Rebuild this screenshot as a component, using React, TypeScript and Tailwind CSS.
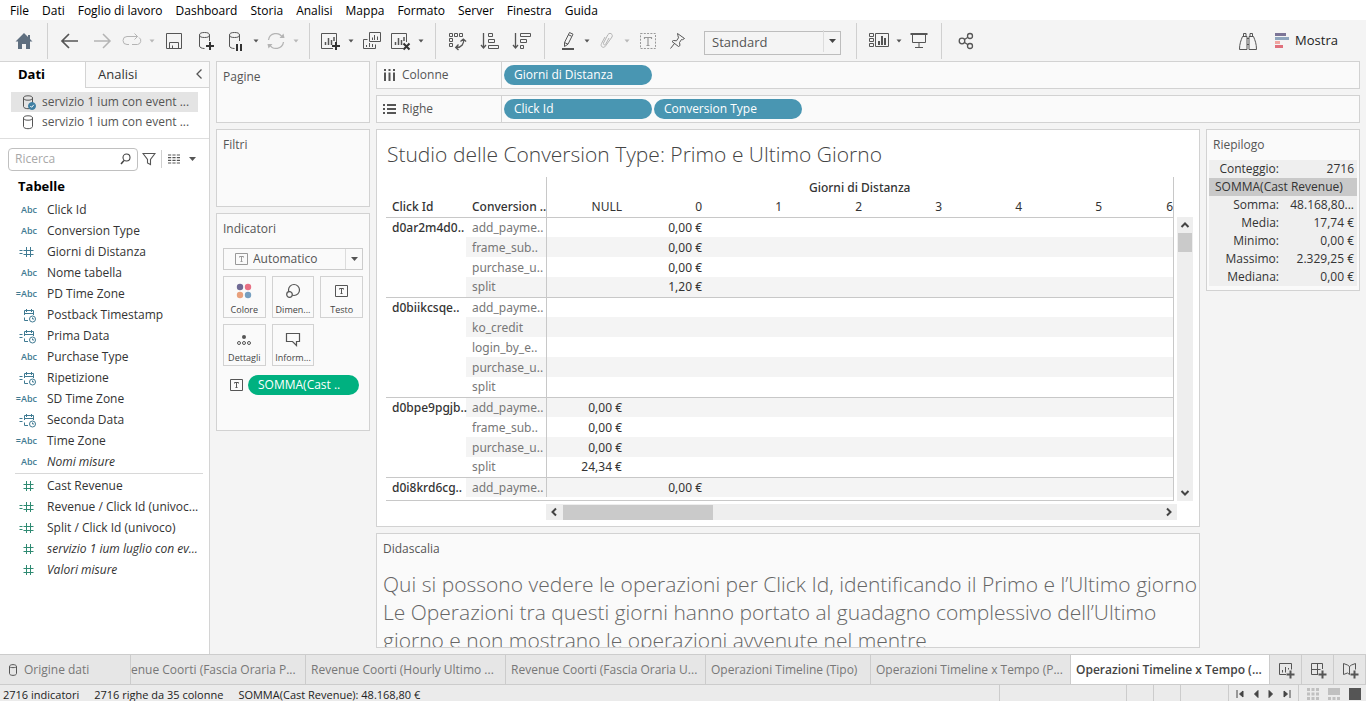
import type { ReactNode } from "react";

const MENU = ["File", "Dati", "Foglio di lavoro", "Dashboard", "Storia", "Analisi", "Mappa", "Formato", "Server", "Finestra", "Guida"];

type Kind = "abc" | "cabc" | "num" | "cnum" | "date" | "cdate";
type Field = { name: string; kind: Kind; italic?: boolean };

const DIMENSIONS: Field[] = [
  { name: "Click Id", kind: "abc" },
  { name: "Conversion Type", kind: "abc" },
  { name: "Giorni di Distanza", kind: "cnum" },
  { name: "Nome tabella", kind: "abc" },
  { name: "PD Time Zone", kind: "cabc" },
  { name: "Postback Timestamp", kind: "date" },
  { name: "Prima Data", kind: "cdate" },
  { name: "Purchase Type", kind: "abc" },
  { name: "Ripetizione", kind: "cdate" },
  { name: "SD Time Zone", kind: "cabc" },
  { name: "Seconda Data", kind: "cdate" },
  { name: "Time Zone", kind: "cabc" },
  { name: "Nomi misure", kind: "abc", italic: true },
];

const MEASURES: Field[] = [
  { name: "Cast Revenue", kind: "num" },
  { name: "Revenue / Click Id (univoc...", kind: "cnum" },
  { name: "Split / Click Id (univoco)", kind: "cnum" },
  { name: "servizio 1 ium luglio con ev...", kind: "num", italic: true },
  { name: "Valori misure", kind: "num", italic: true },
];

const COLUMNS = ["NULL", "0", "1", "2", "3", "4", "5", "6"];

type Row = { type: string; col?: string; value?: string };
const GROUPS: { id: string; rows: Row[] }[] = [
  {
    id: "d0ar2m4d0..",
    rows: [
      { type: "add_payme..", col: "0", value: "0,00 €" },
      { type: "frame_sub..", col: "0", value: "0,00 €" },
      { type: "purchase_u..", col: "0", value: "0,00 €" },
      { type: "split", col: "0", value: "1,20 €" },
    ],
  },
  {
    id: "d0biikcsqe..",
    rows: [{ type: "add_payme.." }, { type: "ko_credit" }, { type: "login_by_e.." }, { type: "purchase_u.." }, { type: "split" }],
  },
  {
    id: "d0bpe9pgjb..",
    rows: [
      { type: "add_payme..", col: "NULL", value: "0,00 €" },
      { type: "frame_sub..", col: "NULL", value: "0,00 €" },
      { type: "purchase_u..", col: "NULL", value: "0,00 €" },
      { type: "split", col: "NULL", value: "24,34 €" },
    ],
  },
  { id: "d0i8krd6cg..", rows: [{ type: "add_payme..", col: "0", value: "0,00 €" }] },
];

const SUMMARY = [
  ["Somma:", "48.168,80..."],
  ["Media:", "17,74 €"],
  ["Minimo:", "0,00 €"],
  ["Massimo:", "2.329,25 €"],
  ["Mediana:", "0,00 €"],
];

function Icon({ children, w = 24, h = 24, className = "" }: { children: ReactNode; w?: number; h?: number; className?: string }) {
  return (
    <svg width={w} height={h} viewBox={`0 0 ${w} ${h}`} fill="none" stroke="currentColor" className={`shrink-0 ${className}`} aria-hidden="true">
      {children}
    </svg>
  );
}

function Tool({ label, children, className = "w-8 text-[#555]" }: { label: string; children: ReactNode; className?: string }) {
  return (
    <button type="button" aria-label={label} className={`flex h-10 shrink-0 items-center justify-center ${className}`}>
      {children}
    </button>
  );
}

function Caret({ label, muted = false }: { label: string; muted?: boolean }) {
  return (
    <button type="button" aria-label={label} className={`flex h-10 w-3 shrink-0 items-center justify-center ${muted ? "text-[#b8b8b8]" : "text-[#555]"}`}>
      <Icon w={6} h={4}>
        <path d="M0.500 0.500h5L3 3.500z" fill="currentColor" stroke="none" />
      </Icon>
    </button>
  );
}

const Sep = ({ className = "" }: { className?: string }) => <span className={`h-9 w-px shrink-0 bg-[#d0d0d0] ${className}`} />;

const Cylinder = () => (
  <>
    <ellipse cx="10.5" cy="6" rx="5" ry="2.5" />
    <path d="M5.500 6v11c0 1.400 2.200 2.500 5 2.500M15.500 6v6" />
  </>
);

const ChartBox = () => (
  <>
    <path d="M14 19.500H2.500v-15h15V13" />
    <path d="M6.500 16v-3M9.500 16V9M12.500 16v-5M15 12V8" strokeWidth="1.500" />
  </>
);

function Toolbar() {
  return (
    <div role="toolbar" aria-label="Strumenti" className="flex h-[41px] shrink-0 items-center bg-[#f4f4f4]">
      <Tool label="Home" className="w-[47px] text-[#5f6f80]">
        <Icon>
          <path d="M12 4L3.500 12.500H6V20h4v-5h4v5h4v-7.500h2.500L18 10V6h-2v2z" fill="currentColor" stroke="none" />
        </Icon>
      </Tool>
      <Sep className="mr-1.5" />
      <Tool label="Indietro">
        <Icon>
          <path d="M20 12H4.500M11 5l-7 7 7 7" strokeWidth="1.700" />
        </Icon>
      </Tool>
      <Tool label="Avanti" className="w-8 text-[#b4b4b4]">
        <Icon>
          <path d="M4 12h15.500M13 5l7 7-7 7" strokeWidth="1.500" />
        </Icon>
      </Tool>
      <Tool label="Ripeti" className="w-7 text-[#b4b4b4]">
        <Icon>
          <path d="M9 15.500H7a4 4 0 0 1 0-8H17.500M14.500 4.500l3 3-3 3M19 8.500a3.800 3.800 0 0 1-1.500 7H12" />
        </Icon>
      </Tool>
      <Caret label="Opzioni ripeti" muted />
      <Tool label="Salva">
        <Icon>
          <path d="M4.500 4.500h15v15h-15zM7.500 19v-5.500h9V19M10.500 19v-2.500" />
        </Icon>
      </Tool>
      <Tool label="Nuova origine dati">
        <Icon>
          <Cylinder />
          <path d="M16 13v8M12 17h8" stroke="#333" strokeWidth="2" />
        </Icon>
      </Tool>
      <Tool label="Sospendi aggiornamenti" className="w-7 text-[#555]">
        <Icon>
          <Cylinder />
          <path d="M13 15v7M17 15v7" stroke="#333" strokeWidth="2" />
        </Icon>
      </Tool>
      <Caret label="Opzioni aggiornamenti" />
      <Tool label="Aggiorna" className="w-7 text-[#b4b4b4]">
        <Icon>
          <path d="M4.500 11a7.500 7.500 0 0 1 14-2.500M19.500 13a7.500 7.500 0 0 1-14 2.500" strokeWidth="1.300" />
          <path d="M15.500 9h5l-1-4.500zM8.500 15h-5l1 4.500z" fill="currentColor" stroke="none" />
        </Icon>
      </Tool>
      <Caret label="Opzioni aggiorna" muted />
      <Sep className="ml-[7px] mr-[7px]" />
      <Tool label="Nuovo foglio" className="w-7 text-[#555]">
        <Icon>
          <ChartBox />
          <path d="M17 13v8M13 17h8" stroke="#333" strokeWidth="2" />
        </Icon>
      </Tool>
      <Caret label="Opzioni nuovo foglio" />
      <Tool label="Duplica foglio" className="w-[30px] text-[#555]">
        <Icon>
          <path d="M9.500 3.500h11v9h-11zM12.500 11V8.500M14.500 11V6M17.500 11V7.500" />
          <path d="M7.500 10.500h-4v9h12v-4M6.500 18v-2M9.500 18v-4M12.500 18v-3" />
        </Icon>
      </Tool>
      <Tool label="Cancella foglio" className="w-7 text-[#555]">
        <Icon>
          <ChartBox />
          <path d="M14.500 14.500l6 6M20.500 14.500l-6 6" stroke="#333" strokeWidth="2" />
        </Icon>
      </Tool>
      <Caret label="Opzioni cancella" />
      <Sep className="ml-2 mr-1.5" />
      <Tool label="Scambia righe e colonne">
        <Icon>
          <path d="M3.500 4.500h3v3h-3zM8.500 4.500h3v3h-3zM13.500 4.500h3v3h-3zM3.500 9.500h3v3h-3zM3.500 14.500h3v3h-3z" />
          <path d="M17.500 10.500c1 4-2 8-7 8M14.500 12.500l2.800-2.500 2.800 2.500M12.500 15.500l-2.800 3 2.800 2.500" strokeWidth="1.300" />
        </Icon>
      </Tool>
      <Tool label="Ordina crescente">
        <Icon>
          <path d="M5.500 4v15M3 16l2.500 3L8 16" strokeWidth="1.300" />
          <path d="M10.500 4.500h4v3h-4zM10.500 10.500h6v3h-6zM10.500 16.500h10v3h-10z" />
        </Icon>
      </Tool>
      <Tool label="Ordina decrescente">
        <Icon>
          <path d="M5.500 4v15M3 16l2.500 3L8 16" strokeWidth="1.300" />
          <path d="M10.500 4.500h10v3h-10zM10.500 10.500h6v3h-6zM10.500 16.500h3v3h-3z" />
        </Icon>
      </Tool>
      <Sep className="ml-1.5 mr-2.5" />
      <Tool label="Evidenzia" className="w-[26px] text-[#555]">
        <Icon>
          <path d="M8.500 13.500l5-10 3.500 1.700-5 10-3.500 2.300zM8.500 13.500l3.500 1.700M12 5.500l3.500 1.700" />
          <path d="M6 20h12" strokeWidth="2" />
        </Icon>
      </Tool>
      <Caret label="Opzioni evidenzia" />
      <Tool label="Raggruppa" className="w-7 text-[#b4b4b4]">
        <Icon>
          <path d="M10 8l-3.500 6.500c-1.500 3 2 5.500 4 2.500L17 8c1.500-3-2.500-5-4-2.500L8.500 14c-.5 2 1.500 2.500 2.200 1.200L14 9" />
        </Icon>
      </Tool>
      <Caret label="Opzioni raggruppa" muted />
      <Tool label="Mostra etichette" className="w-[30px] text-[#999]">
        <Icon>
          <path d="M4.500 4.500h15v15h-15z" strokeDasharray="2 1.300" />
          <path d="M8.500 10V8.500h7V10M12 8.500v8M10.500 16.500h3" strokeWidth="1.200" />
        </Icon>
      </Tool>
      <Tool label="Blocca assi" className="w-7 text-[#555]">
        <Icon>
          <path d="M12.500 4.500l7 5-2 1.200-1-.2-2 3 .5 3-1.500 1L7 12.500l1.500-1 3 .3 2-3-.6-2.300zM9.500 14.500l-4 5" />
        </Icon>
      </Tool>
      <div className="relative ml-[13px] h-6 w-[137px] shrink-0">
        <select aria-label="Adatta" className="h-6 w-full appearance-none rounded-none border border-[#bdbdbd] bg-[#f4f4f4] pb-1 pl-[7px] text-[13px] leading-5 text-[#555]">
          <option>Standard</option>
        </select>
        <span className="pointer-events-none absolute inset-y-px right-px flex w-[17px] items-center justify-center border-l border-[#dcdcdc] text-[#444]">
          <Icon w={7} h={4}>
            <path d="M0 0h7L3.500 4z" fill="currentColor" stroke="none" />
          </Icon>
        </span>
      </div>
      <Sep className="ml-[15px] mr-2" />
      <Tool label="Mostra schede" className="w-7 text-[#555]">
        <Icon>
          <path d="M2.500 4.500h4v3h-4zM2.500 9.500h4v3h-4zM2.500 14.500h4v3h-4zM8.500 4.500h13v13h-13z" />
          <path d="M12 16v-4M15 16V7M18 16V9" strokeWidth="2" />
        </Icon>
      </Tool>
      <Caret label="Opzioni schede" />
      <Tool label="Presentazione" className="w-7 text-[#555]">
        <Icon>
          <path d="M3.500 5h17" strokeWidth="2" />
          <path d="M5.500 5.500v8h13v-8M12 13.500v5M8 18.500h8" />
        </Icon>
      </Tool>
      <Sep className="ml-2 mr-2" />
      <Tool label="Condividi">
        <Icon>
          <circle cx="8" cy="12" r="2.800" strokeWidth="1.300" />
          <circle cx="16" cy="7" r="2.500" strokeWidth="1.300" />
          <circle cx="16" cy="17" r="2.500" strokeWidth="1.300" />
          <path d="M10.500 10.500L14 8.300M10.500 13.500l3.500 2.200" strokeWidth="1.300" />
        </Icon>
      </Tool>
      <Tool label="Cerca" className="ml-auto w-8 text-[#555]">
        <Icon>
          <path d="M3.500 20.500c0-6 1.500-9 3-13h4.500v13zM20.500 20.500c0-6-1.500-9-3-13H13v13zM7.500 7.500v-3h2.500v3M14 7.500v-3h2.500v3M11 9.500h2M11 15.500h2" />
        </Icon>
      </Tool>
      <button type="button" className="ml-2.5 mr-7 flex h-10 items-center gap-1.5 pb-0.5 text-[13px] leading-5 text-[#222]">
        <Icon w={15} h={16} className="text-transparent">
          <path d="M1 1h11v3H1z" fill="#7c7597" />
          <path d="M1 5h14v3H1z" fill="#8fa5bd" />
          <path d="M1 9h5v3H1z" fill="#f0a5a0" />
          <path d="M1 13h8v3H1z" fill="#e0707c" />
        </Icon>
        Mostra
      </button>
    </div>
  );
}

function FieldIcon({ kind, color }: { kind: Kind; color: string }) {
  if (kind === "abc" || kind === "cabc") {
    return (
      <span className={`text-[9px] font-semibold leading-4 ${color}`}>
        {kind === "cabc" ? "=" : ""}Abc
      </span>
    );
  }
  const calculated = kind === "cnum" || kind === "cdate";
  return (
    <Icon w={18} h={16} className={color}>
      {calculated && <path d="M0.500 6.500h3M0.500 9.500h3" />}
      {kind === "num" || kind === "cnum" ? (
        <path d="M7.500 3v10M11.500 3v10M4.500 6.500h10M4.500 10.500h10" />
      ) : (
        <>
          <path d="M9 13.500H5.500v-3M5.500 8v-4.500h9V8M5 6.500h10M7.500 2v3M12.500 2v3" />
          <circle cx="13.500" cy="12" r="3" />
          <path d="M13.500 10.500V12H15" />
        </>
      )}
    </Icon>
  );
}

function FieldList({ items, color }: { items: Field[]; color: string }) {
  return (
    <ul>
      {items.map((f) => (
        <li key={f.name} className="flex h-[21px] items-center text-[#333]">
          <span className="mr-2.5 flex w-[37px] shrink-0 justify-end">
            <FieldIcon kind={f.kind} color={color} />
          </span>
          <span className={`whitespace-nowrap text-[12px] leading-5 ${f.italic ? "italic" : ""}`}>{f.name}</span>
        </li>
      ))}
    </ul>
  );
}

function DataPane() {
  return (
    <aside className="flex w-[210px] shrink-0 flex-col border-r border-[#d4d4d4] bg-white">
      <div className="flex h-[27px] text-[13px] leading-5 text-[#333]">
        <button type="button" className="w-[85px] shrink-0 border-t border-[#d4d4d4] pb-0.5 pl-[18px] text-left font-bold text-black">
          Dati
        </button>
        <div className="flex flex-1 items-center border border-r-0 border-[#d4d4d4] bg-[#f9f9f9] pb-0.5 pl-3">
          <button type="button">Analisi</button>
          <button type="button" aria-label="Comprimi" className="ml-auto mr-1.5 text-[#555]">
            <Icon w={8} h={12}>
              <path d="M6.500 1.500L2 6l4.500 4.500" strokeWidth="1.300" />
            </Icon>
          </button>
        </div>
      </div>
      <ul className="mt-1 border-b border-[#dedede] pb-1.5 text-[12px] leading-5 text-[#555]">
        {[true, false].map((on) => (
          <li key={String(on)} className={`ml-[11px] mr-[11px] flex h-5 items-center gap-1.5 pl-2.5 ${on ? "bg-[#e4e4e4]" : ""}`}>
            <Icon w={15} h={16}>
              <ellipse cx="7" cy="4" rx="4.500" ry="2.200" />
              <path d="M2.500 4v8.500c0 1.200 2 2.200 4.500 2.200s4.500-1 4.500-2.200V4" />
              {on && (
                <>
                  <circle cx="11" cy="12" r="3.500" fill="#3f7fa3" stroke="#3f7fa3" />
                  <path d="M9.300 12l1.300 1.300 2.200-2.500" stroke="#fff" />
                </>
              )}
            </Icon>
            servizio 1 ium con event ...
          </li>
        ))}
      </ul>
      <div className="mt-2 flex h-6 items-center pl-2">
        <label className="flex h-[23px] w-[130px] items-center rounded-sm border border-[#c0c0c0] pl-1.5 pr-1.5">
          <input type="text" aria-label="Ricerca" placeholder="Ricerca" className="w-0 flex-1 bg-transparent text-[12px] leading-5 outline-none placeholder:text-[#a8a8a8]" />
          <Icon w={11} h={12} className="text-[#444]">
            <circle cx="6.500" cy="4.500" r="3.500" strokeWidth="1.100" />
            <path d="M4 7.500L1 11" strokeWidth="1.500" />
          </Icon>
        </label>
        <button type="button" aria-label="Filtra" className="ml-1 text-[#555]">
          <Icon w={14} h={14}>
            <path d="M1 1.500h12L8.500 7.500v5l-3-1.500V7.500z" strokeWidth="1.100" />
          </Icon>
        </button>
        <span className="ml-[5px] h-[18px] w-px bg-[#d0d0d0]" />
        <button type="button" aria-label="Visualizza" className="ml-1.5 flex items-center gap-[9px] text-[#555]">
          <Icon w={12} h={10}>
            <path d="M0 1h12M0 3.700h12M0 6.400h12M0 9h12" strokeWidth="1.200" strokeDasharray="3.200 1.200" />
          </Icon>
          <Icon w={7} h={4}>
            <path d="M0 0h7L3.500 4z" fill="currentColor" stroke="none" />
          </Icon>
        </button>
      </div>
      <h2 className="mt-1 pl-[18px] text-[13px] font-bold leading-[22px] text-black">Tabelle</h2>
      <div className="mt-0.5">
        <FieldList items={DIMENSIONS} color="text-[#3f7a92]" />
        <div className="mb-px ml-[15px] mr-1.5 mt-px border-t border-[#d8d8d8]" />
        <FieldList items={MEASURES} color="text-[#2f8a72]" />
      </div>
    </aside>
  );
}

function TextIcon({ className = "" }: { className?: string }) {
  return (
    <Icon w={13} h={12} className={className}>
      <path d="M0.500 0.500h12v11h-12z" />
      <path d="M4.500 4.500v-1h4v1M6.500 3.500v5M5.500 8.500h2" />
    </Icon>
  );
}

const MARKS: { label: string; icon: ReactNode }[] = [
  {
    label: "Colore",
    icon: (
      <Icon w={16} h={16} className="text-transparent">
        <circle cx="4" cy="4" r="3.200" fill="#6f6a94" />
        <circle cx="12" cy="4" r="3.200" fill="#e87084" />
        <circle cx="4" cy="12" r="3.200" fill="#e8a07c" />
        <circle cx="12" cy="12" r="3.200" fill="#769fc0" />
      </Icon>
    ),
  },
  {
    label: "Dimen...",
    icon: (
      <Icon w={16} h={16}>
        <circle cx="9" cy="7" r="5.500" strokeWidth="1.200" />
        <circle cx="4.500" cy="11.500" r="2.800" fill="#fafafa" strokeWidth="1.200" />
      </Icon>
    ),
  },
  { label: "Testo", icon: <TextIcon /> },
  {
    label: "Dettagli",
    icon: (
      <Icon w={16} h={16}>
        <circle cx="8" cy="6" r="2" fill="currentColor" stroke="none" />
        <circle cx="3" cy="12" r="1.500" />
        <circle cx="8" cy="12" r="1.500" />
        <circle cx="13" cy="12" r="1.500" />
      </Icon>
    ),
  },
  {
    label: "Inform...",
    icon: (
      <Icon w={16} h={16}>
        <path d="M1.500 2.500h13v8h-3v4l-4-4h-6z" strokeWidth="1.200" />
      </Icon>
    ),
  },
];

function Cards() {
  const card = "border border-[#d2d2d2] bg-[#fafafa] px-1.5";
  const title = "text-[12px] leading-[30px] text-[#555]";
  return (
    <div className="flex w-[154px] shrink-0 flex-col gap-1.5">
      <section className={`h-[62px] ${card}`}>
        <h2 className={title}>Pagine</h2>
      </section>
      <section className={`h-[78px] ${card}`}>
        <h2 className={title}>Filtri</h2>
      </section>
      <section className={`pb-[35px] ${card}`}>
        <h2 className={title}>Indicatori</h2>
        <div className="relative mt-1 flex h-[22px] text-[#555]">
          <TextIcon className="absolute left-3 top-[5px] text-[#999]" />
          <select aria-label="Tipo di indicatore" className="w-full appearance-none rounded-none border border-[#ccc] bg-transparent pl-[29px] text-[12px] leading-5">
            <option>Automatico</option>
          </select>
          <span className="pointer-events-none absolute inset-y-px right-px flex w-[17px] items-center justify-center border-l border-[#dcdcdc]">
            <Icon w={7} h={4}>
              <path d="M0 0h7L3.500 4z" fill="currentColor" stroke="none" />
            </Icon>
          </span>
        </div>
        <div className="mt-1.5 grid grid-cols-3 gap-x-[6px] gap-y-1.5">
          {MARKS.map((m) => (
            <button key={m.label} type="button" className="flex h-[42px] flex-col items-center justify-between border border-[#d2d2d2] pt-1.5 text-[9px] leading-[14px] text-[#444]">
              <span className="flex h-4 items-center text-[#555]">{m.icon}</span>
              <span>{m.label}</span>
            </button>
          ))}
        </div>
        <div className="mt-[9px] flex items-center gap-[5px] pl-[7px] text-[#555]">
          <TextIcon />
          <span className="mr-1 h-5 flex-1 whitespace-nowrap rounded-full bg-[#00b180] pl-2.5 text-[12px] font-medium leading-5 text-white">SOMMA(Cast ..</span>
        </div>
      </section>
    </div>
  );
}

function Shelf({ label, icon, pills }: { label: string; icon: ReactNode; pills: string[] }) {
  return (
    <section className="flex h-7 items-center border border-[#d2d2d2] bg-[#fafafa]">
      <h2 className="flex h-full w-[125px] shrink-0 items-center gap-1.5 border-r border-[#d2d2d2] pl-1.5 text-[12px] leading-5 text-[#555]">
        {icon}
        {label}
      </h2>
      <div className="flex gap-0.5 pl-0.5">
        {pills.map((p) => (
          <span key={p} className="h-5 w-[148px] rounded-full bg-[#4996b2] pl-2.5 text-[12px] font-medium leading-5 text-white">
            {p}
          </span>
        ))}
      </div>
    </section>
  );
}

function Crosstab() {
  let index = 0;
  return (
    <div className="h-[324px] min-w-0 flex-1 overflow-hidden border-b border-r border-[#c8c8c8]">
      <table className="w-full table-fixed border-collapse font-['Noto_Sans','Open_Sans',sans-serif] text-[12px] leading-[19px] text-[#333]">
        <colgroup>
          {Array.from({ length: 9 }, (_, i) => (
            <col key={i} className="w-20" />
          ))}
          <col />
        </colgroup>
        <thead>
          <tr className="h-5">
            <td colSpan={2} className="border-r border-[#c8c8c8]" />
            <th colSpan={8} scope="colgroup" className="text-center font-medium">
              Giorni di Distanza
            </th>
          </tr>
          <tr className="h-5 border-b border-[#c8c8c8]">
            <th scope="col" className="whitespace-nowrap pl-1.5 text-left font-medium">Click Id</th>
            <th scope="col" className="whitespace-nowrap border-r border-[#c8c8c8] pl-1.5 text-left font-medium">Conversion ..</th>
            {COLUMNS.map((c) => (
              <th key={c} scope="col" className={`text-right font-normal ${c === "6" ? "" : "pr-1"}`}>
                {c}
              </th>
            ))}
          </tr>
        </thead>
        <tbody>
          {GROUPS.map((g) =>
            g.rows.map((r, i) => {
              const striped = index++ % 2 === 1;
              const bg = striped ? "bg-[#f4f4f4]" : "";
              const line = i === 0 ? "border-t border-[#c8c8c8]" : "";
              return (
                <tr key={g.id + r.type} className={`h-5 ${line}`}>
                  {i === 0 && (
                    <th scope="rowgroup" rowSpan={g.rows.length} className="whitespace-nowrap pl-1.5 text-left align-top font-medium">
                      {g.id}
                    </th>
                  )}
                  <td className={`whitespace-nowrap border-r border-[#c8c8c8] pl-1.5 text-[#777] ${bg}`}>{r.type}</td>
                  {COLUMNS.map((c) => (
                    <td key={c} className={`pr-1 text-right ${bg}`}>
                      {r.col === c ? r.value : ""}
                    </td>
                  ))}
                </tr>
              );
            }),
          )}
        </tbody>
      </table>
    </div>
  );
}

function Arrow({ d, label }: { d: string; label: string }) {
  return (
    <button type="button" aria-label={label} className="flex h-4 w-4 shrink-0 items-center justify-center text-[#444]">
      <Icon w={10} h={10}>
        <path d={d} strokeWidth="2" />
      </Icon>
    </button>
  );
}

function Sheet() {
  return (
    <section className="border border-[#d2d2d2] bg-white pb-1.5 pl-[9px]">
      <h1 className="whitespace-nowrap pl-px pt-[7px] text-[21px] font-light leading-[35px] text-[#444]">Studio delle Conversion Type: Primo e Ultimo Giorno</h1>
      <div className="mt-[5px] flex pr-1.5">
        <Crosstab />
        <div className="ml-[3px] mt-10 flex w-4 flex-col items-center bg-[#eee]">
          <Arrow label="Su" d="M1.500 7L5 3.500 8.500 7" />
          <div className="h-[19px] w-3.5 bg-[#cacaca]" />
          <div className="mt-auto">
            <Arrow label="Giù" d="M1.500 3L5 6.500 8.500 3" />
          </div>
        </div>
      </div>
      <div className="ml-40 mr-[22px] mt-[3px] flex h-4 items-center bg-[#eee]">
        <Arrow label="Sinistra" d="M7 1.500L3.500 5 7 8.500" />
        <div className="ml-px h-[15px] w-[150px] bg-[#cacaca]" />
        <div className="ml-auto">
          <Arrow label="Destra" d="M3 1.500L6.500 5 3 8.500" />
        </div>
      </div>
    </section>
  );
}

function Summary() {
  return (
    <section className="w-[154px] shrink-0 self-start border border-[#d2d2d2] bg-[#fafafa] px-0.5 pb-1">
      <h2 className="pl-1 text-[12px] leading-[30px] text-[#555]">Riepilogo</h2>
      <table className="w-full table-fixed bg-[#efefef] text-[12px] leading-[18px] text-[#333]">
        <tbody>
          <tr>
            <th scope="row" className="w-[70px] text-right font-normal">Conteggio:</th>
            <td className="pr-[3px] text-right">2716</td>
          </tr>
          <tr className="bg-[#c9c9c9]">
            <th scope="colgroup" colSpan={2} className="whitespace-nowrap pl-1.5 text-left font-normal">SOMMA(Cast Revenue)</th>
          </tr>
          {SUMMARY.map(([k, v]) => (
            <tr key={k}>
              <th scope="row" className="text-right font-normal">{k}</th>
              <td className="whitespace-nowrap pr-[3px] text-right">{v}</td>
            </tr>
          ))}
        </tbody>
      </table>
    </section>
  );
}

function SheetTabs() {
  const tab = "flex shrink-0 items-center whitespace-nowrap border-r border-[#ccc] text-[12px] leading-5";
  const plus = <path d="M13.500 9.500v8M9.500 13.500h8" strokeWidth="2" />;
  return (
    <nav className="flex h-[31px] shrink-0 border-y border-[#ccc] bg-[#e6e6e6] text-[#777]">
      <button type="button" className={`w-[131px] gap-1.5 pl-[9px] ${tab}`}>
        <Icon w={9} h={12} className="text-[#555]">
          <path d="M0.500 2.500c0-2.500 7-2.500 7 0v7c0 2.500-7 2.500-7 0zc0 1.500 7 1.500 7 0" />
        </Icon>
        Origine dati
      </button>
      <button type="button" className={`w-[175px] ${tab}`}>enue Coorti (Fascia Oraria P...</button>
      <button type="button" className={`w-[200px] pl-[5px] ${tab}`}>Revenue Coorti (Hourly Ultimo ...</button>
      <button type="button" className={`w-[200px] pl-[5px] ${tab}`}>Revenue Coorti (Fascia Oraria U...</button>
      <button type="button" className={`w-[165px] pl-[5px] ${tab}`}>Operazioni Timeline (Tipo)</button>
      <button type="button" className={`w-[200px] pl-[5px] ${tab}`}>Operazioni Timeline x Tempo (P...</button>
      <button type="button" className={`w-[199px] bg-white pl-[5px] font-semibold text-[#444] ${tab}`}>Operazioni Timeline x Tempo (...</button>
      <button type="button" aria-label="Nuovo foglio di lavoro" className={`w-8 justify-center text-[#555] ${tab}`}>
        <Icon w={18} h={18}>
          <path d="M9 13.500H2.500v-11h12V8.500M5.500 11.500V9M8.500 11.500V6M11.500 8.500V7" />
          {plus}
        </Icon>
      </button>
      <button type="button" aria-label="Nuovo dashboard" className={`w-8 justify-center text-[#555] ${tab}`}>
        <Icon w={18} h={18}>
          <path d="M9 13.500H2.500v-11h11V8M8.500 2.500v11M2.500 8.500h9" />
          {plus}
        </Icon>
      </button>
      <button type="button" aria-label="Nuova storia" className={`w-8 justify-center text-[#555] ${tab}`}>
        <Icon w={18} h={18}>
          <path d="M8.500 13.500l-2-1.500-4 1.500V2.500l4 1.500 2 1.500 2-1.500 4-1.500v6M8.500 5.500v8" />
          {plus}
        </Icon>
      </button>
    </nav>
  );
}

function StatusBar() {
  const seg = "h-full border-l border-[#ccc]";
  return (
    <footer className="flex h-4 shrink-0 items-start whitespace-nowrap bg-[#ebebeb] pl-[3px] text-[11px] leading-5 text-[#222]">
      <span>2716 indicatori</span>
      <span className="ml-[15px]">2716 righe da 35 colonne</span>
      <span className="ml-[15px]">SOMMA(Cast Revenue): 48.168,80 €</span>
      <span className={`ml-auto w-[127px] ${seg}`} />
      <span className={`w-[27px] ${seg}`} />
      <span className={`w-[27px] ${seg}`} />
      <span className={`w-[48px] ${seg}`} />
      <span className={`flex w-[70px] items-center justify-between px-1.5 pt-0.5 text-[#444] ${seg}`}>
        {["M2 1v8M8 2L4.500 5l3.500 3z", "M7 1.500L3.500 5l3.500 3.500z", "M3 1.500L6.500 5 3 8.500z", "M8 1v8M2 2l3.500 3L2 8z"].map((d, i) => (
          <button key={i} type="button" aria-label={["Primo foglio", "Foglio precedente", "Foglio successivo", "Ultimo foglio"][i]}>
            <Icon w={10} h={10} className="block">
              <path d={d} fill="currentColor" />
            </Icon>
          </button>
        ))}
      </span>
      <span className={`flex w-[68px] items-center gap-[9px] pl-2 pt-0.5 text-[#c0c0c0] ${seg}`}>
        <button type="button" aria-label="Griglia">
          <Icon w={12} h={12} className="block">
            <path d="M0 1.500h12M0 6h12M0 10.500h12" strokeWidth="3" strokeDasharray="3 1.500" />
          </Icon>
        </button>
        <button type="button" aria-label="Anteprime">
          <Icon w={12} h={12} className="block">
            <path d="M0 3.500h12" strokeWidth="7" />
            <path d="M0 10.500h12" strokeWidth="3" strokeDasharray="3 1.500" />
          </Icon>
        </button>
        <button type="button" aria-label="Foglio singolo" className="h-3 w-3 bg-[#555]" />
      </span>
    </footer>
  );
}

export default function App() {
  return (
    <div className="flex h-screen flex-col overflow-hidden bg-[#f4f4f4] font-['Open_Sans','Noto_Sans',sans-serif]">
      <nav className="flex h-5 shrink-0 items-center gap-[13px] bg-white pl-2.5 pt-0.5 text-[12px] leading-5 text-black">
        {MENU.map((m) => (
          <button key={m} type="button">
            {m}
          </button>
        ))}
      </nav>
      <Toolbar />
      <div className="flex min-h-0 flex-1">
        <DataPane />
        <div className="flex min-w-0 flex-1 gap-1.5 px-1.5">
          <Cards />
          <main className="flex min-w-0 flex-1 flex-col gap-1.5">
            <Shelf
              label="Colonne"
              pills={["Giorni di Distanza"]}
              icon={
                <Icon w={13} h={12}>
                  <path d="M2 0v2M6.500 0v2M11 0v2M2 3.500V12M6.500 3.500V12M11 3.500V12" strokeWidth="2" />
                </Icon>
              }
            />
            <Shelf
              label="Righe"
              pills={["Click Id", "Conversion Type"]}
              icon={
                <Icon w={13} h={12}>
                  <path d="M0 2h2M0 6h2M0 10h2M4 2h9M4 6h9M4 10h9" strokeWidth="2" />
                </Icon>
              }
            />
            <div className="flex min-h-0 flex-1 gap-1.5">
              <div className="flex min-w-0 flex-1 flex-col gap-1.5">
                <Sheet />
                <section className="mb-1.5 min-h-0 flex-1 overflow-hidden border border-[#d2d2d2] bg-[#fafafa] pl-1.5">
                  <h2 className="text-[12px] leading-[30px] text-[#555]">Didascalia</h2>
                  <p className="mt-1.5 whitespace-nowrap text-[21px] font-light leading-7 text-[#666]">
                    Qui si possono vedere le operazioni per Click Id, identificando il Primo e l’Ultimo giorno
                    <br />
                    Le Operazioni tra questi giorni hanno portato al guadagno complessivo dell’Ultimo
                    <br />
                    giorno e non mostrano le operazioni avvenute nel mentre
                  </p>
                </section>
              </div>
              <Summary />
            </div>
          </main>
        </div>
      </div>
      <SheetTabs />
      <StatusBar />
    </div>
  );
}
